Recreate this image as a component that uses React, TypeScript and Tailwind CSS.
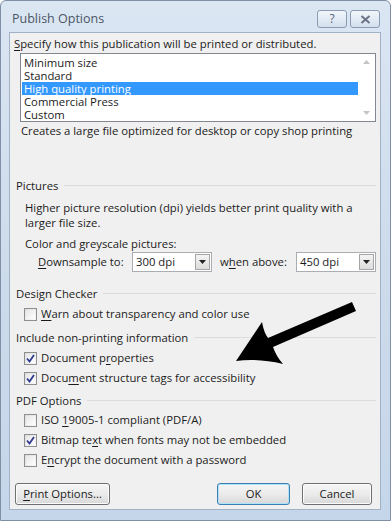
import React from "react";

const font = { fontFamily: '"Open Sans", "Noto Sans", Arial, sans-serif' };

const U = ({ children }: { children: React.ReactNode }) => <span className="underline underline-offset-[1.5px]">{children}</span>;

const SectionHeader = ({ label, mt }: { label: string; mt: string }) => (
    <div className={`flex items-center h-[16px] pl-[6px] pr-[4px] ${mt}`}>
        <span>{label}</span>
        <div className="flex-1 ml-[6px] h-[2px] border-t border-[#dcdcdc] border-b-white" />
    </div>
);

const Checkbox = ({ checked }: { checked?: boolean }) => (
    <div className="w-[13px] h-[13px] border border-[#8e8f8f] bg-gradient-to-br from-[#dcdcdc] to-[#f8f8f8] flex items-center justify-center p-[1px]">
        <div className="w-full h-full bg-gradient-to-br from-[#e6e6e6] to-white flex items-center justify-center">
            {checked && (
                <svg width="9" height="9" viewBox="0 0 9 9">
                    <path d="M1 4.5 L3.5 7.5 L8 1" fill="none" stroke="#2e3b8f" strokeWidth="1.8" />
                </svg>
            )}
        </div>
    </div>
);

const CheckRow = ({ checked, children, h = "h-[20px]" }: { checked?: boolean; children: React.ReactNode; h?: string }) => (
    <div className={`flex items-center gap-[4px] pl-[14px] ${h}`}>
        <Checkbox checked={checked} />
        <span>{children}</span>
    </div>
);

const Select = ({ value }: { value: string }) => (
    <div className="w-[80px] h-[20px] border border-[#abadb3] bg-white flex items-center justify-between pl-[3px] pr-[1px]">
        <span>{value}</span>
        <div className="w-[15px] h-[16px] border border-[#a6a6a6] bg-gradient-to-b from-[#f4f4f4] to-[#dcdcdc] flex items-center justify-center">
            <svg width="7" height="4" viewBox="0 0 7 4"><path d="M0 0 H7 L3.5 4 Z" fill="#222" /></svg>
        </div>
    </div>
);

const Button = ({ children, primary, w }: { children: React.ReactNode; primary?: boolean; w: string }) => (
    <div className={`${w} h-[22px] rounded-[3px] border flex items-center justify-center bg-gradient-to-b from-[#f6f6f6] via-[#ebebeb] to-[#d8d8d8] ${primary ? "border-[#3c7fb1] shadow-[inset_0_0_0_1px_#aee2f8]" : "border-[#707070] shadow-[inset_0_0_0_1px_#fcfcfc]"}`}>
        {children}
    </div>
);

const App = () => {
    const items = ["Minimum size", "Standard", "High quality printing", "Commercial Press", "Custom"];

    return (
        <div className="w-[391px] h-[521px] relative overflow-hidden bg-white text-[11.3px] text-[#1b1b1b]" style={font}>
            <div className="w-full h-full flex flex-col bg-gradient-to-b from-[#dbe6f3] via-[#cddbeb] to-[#c6d6ea] border border-[#7f90a6] rounded-t-[6px]">
                {/* barra de título */}
                <div className="h-[31px] flex items-start justify-between">
                    <span className="pl-[11px] pt-[9px] text-[12.5px] text-[#4b5566]">Publish Options</span>
                    <div className="flex gap-[3px] pt-[9px] pr-[10px]">
                        <div className="w-[30px] h-[18px] rounded-[3px] border border-[#8a9bb2] bg-gradient-to-b from-[#f2f6fb] to-[#d3dfee] flex items-center justify-center text-[12px] text-[#5b6678]">?</div>
                        <div className="w-[30px] h-[18px] rounded-[3px] border border-[#8a9bb2] bg-gradient-to-b from-[#f2f6fb] to-[#d3dfee] flex items-center justify-center">
                            <svg width="11" height="9" viewBox="0 0 11 9"><path d="M1.5 1 L9.5 8 M9.5 1 L1.5 8" stroke="#6a7486" strokeWidth="2" /></svg>
                        </div>
                    </div>
                </div>

                {/* área cliente */}
                <div className="ml-[8px] mr-[9px] h-[478px] border border-[#a2b2c6] bg-[#f0f0f0] flex flex-col">
                    <div className="h-[16px] mt-[3px] pl-[4px] flex items-center">
                        <span><U>S</U>pecify how this publication will be printed or distributed.</span>
                    </div>
                    <div className="ml-[10px] w-[356px] h-[69px] mt-[1px] border border-[#828790] bg-white flex">
                        <div className="flex-1 flex flex-col pt-[2px] pl-[1px]">
                            {items.map((item) => (
                                <div key={item} className={`h-[13px] leading-[13px] pl-[2px] ${item === "High quality printing" ? "bg-[#3399ff] text-white" : ""}`}>
                                    {item}
                                </div>
                            ))}
                        </div>
                        <div className="w-[17px] flex flex-col justify-between items-center py-[6px]">
                            <svg width="7" height="4" viewBox="0 0 7 4"><path d="M0 4 H7 L3.5 0 Z" fill="#c4c4c4" /></svg>
                            <svg width="7" height="4" viewBox="0 0 7 4"><path d="M0 0 H7 L3.5 4 Z" fill="#c4c4c4" /></svg>
                        </div>
                    </div>
                    <div className="h-[16px] mt-[1px] pl-[11px] flex items-center">
                        Creates a large file optimized for desktop or copy shop printing
                    </div>

                    <SectionHeader label="Pictures" mt="mt-[39px]" />
                    <div className="mt-[6px] pl-[15px] leading-[15px]">
                        Higher picture resolution (dpi) yields better print quality with a<br />larger file size.
                    </div>
                    <div className="h-[16px] mt-[6px] pl-[15px] flex items-center">Color and greyscale pictures:</div>
                    <div className="h-[20px] pl-[28px] flex items-center">
                        <span className="w-[94px]"><U>D</U>ownsample to:</span>
                        <Select value="300 dpi" />
                        <span className="w-[84px] pl-[8px]">w<U>h</U>en above:</span>
                        <Select value="450 dpi" />
                    </div>

                    <SectionHeader label="Design Checker" mt="mt-[14px]" />
                    <div className="mt-[2px]">
                        <CheckRow><U>W</U>arn about transparency and color use</CheckRow>
                    </div>

                    <SectionHeader label="Include non-printing information" mt="mt-[6px]" />
                    <div className="mt-[2px]">
                        <CheckRow checked>Document p<U>r</U>operties</CheckRow>
                        <CheckRow checked>Docu<U>m</U>ent structure tags for accessibility</CheckRow>
                    </div>

                    <SectionHeader label="PDF Options" mt="mt-[5px]" />
                    <div className="mt-[2px]">
                        <CheckRow h="h-[19px]">ISO <U>1</U>9005-1 compliant (PDF/A)</CheckRow>
                        <CheckRow checked>Bitmap te<U>x</U>t when fonts may not be embedded</CheckRow>
                        <CheckRow>E<U>n</U>crypt the document with a password</CheckRow>
                    </div>

                    <div className="mt-[13px] flex items-center pl-[5px]">
                        <Button w="w-[95px]"><span><U>P</U>rint Options...</span></Button>
                        <div className="ml-[107px]">
                            <Button w="w-[73px]" primary>OK</Button>
                        </div>
                        <div className="ml-[12px]">
                            <Button w="w-[70px]">Cancel</Button>
                        </div>
                    </div>
                </div>
            </div>

            {/* flecha */}
            <svg className="absolute left-0 top-0 pointer-events-none" width="391" height="521" viewBox="0 0 391 521">
                <path d="M236 361 L262 322 Q264 333 268 338 L352 302 L356 311 L273 347 Q276 356 283 364 Q258 358 236 361 Z" fill="#000" />
            </svg>
        </div>
    );
};

export default App;
